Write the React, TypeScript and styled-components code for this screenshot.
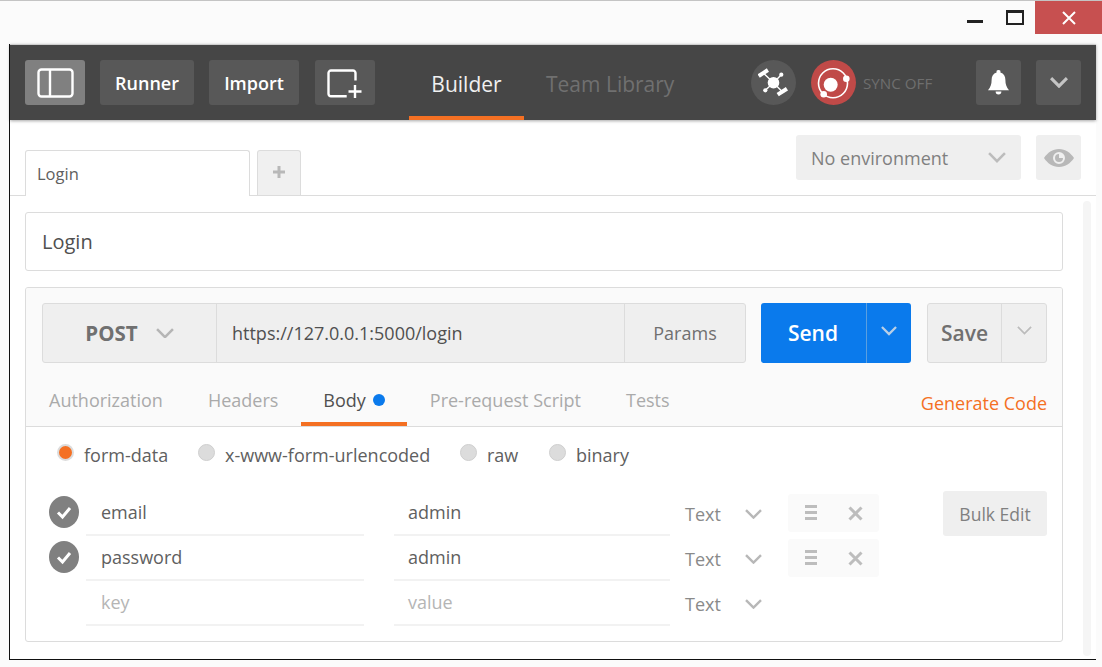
import React from "react";
import styled, { createGlobalStyle } from "styled-components";

const GlobalStyle = createGlobalStyle`
  html, body {
    margin: 0;
    padding: 0;
    height: 667px;
    overflow: hidden;
    background: #fbfbfb;
    font-family: "Open Sans", "Liberation Sans", sans-serif;
  }
  * { box-sizing: border-box; }
`;

const Chevron: React.FC<{ size?: number; color?: string; width?: number }> = ({
  size = 17,
  color = "#b5b5b5",
  width = 2.4,
}) => (
  <svg width={size} height={size * 0.6} viewBox="0 0 17 10" fill="none">
    <path d="M1 1l7.5 7.5L16 1" stroke={color} strokeWidth={width} />
  </svg>
);

const App: React.FC = () => {
  const tabs = ["Authorization", "Headers", "Body", "Pre-request Script", "Tests"];
  const rows = [
    { key: "email", value: "admin", filled: true },
    { key: "password", value: "admin", filled: true },
    { key: "key", value: "value", filled: false },
  ];

  return (
    <Page>
      <GlobalStyle />
      <TitleBar>
        <MinButton>
          <svg width="16" height="16" viewBox="0 0 16 16">
            <rect x="0" y="11" width="16" height="3" fill="#222" />
          </svg>
        </MinButton>
        <MaxButton>
          <svg width="18" height="15" viewBox="0 0 18 15" fill="none">
            <rect x="1" y="1" width="16" height="13" stroke="#222" strokeWidth="2" />
            <rect x="1" y="1" width="16" height="2" fill="#222" />
          </svg>
        </MaxButton>
        <CloseButton>
          <svg width="14" height="14" viewBox="0 0 14 14" fill="none">
            <path d="M1 1l12 12M13 1L1 13" stroke="#fff" strokeWidth="2" />
          </svg>
        </CloseButton>
      </TitleBar>

      <Window>
        <Header>
          <HeaderButton $active $width={60}>
            <svg width="37" height="30" viewBox="0 0 37 30" fill="none">
              <rect x="1.5" y="1.5" width="34" height="27" rx="3" stroke="#fff" strokeWidth="2.4" />
              <path d="M13 2v26" stroke="#fff" strokeWidth="2.4" />
            </svg>
          </HeaderButton>
          <HeaderButton $width={94}>Runner</HeaderButton>
          <HeaderButton $width={90}>Import</HeaderButton>
          <NewButton $width={60}>
            <svg width="36" height="32" viewBox="0 0 36 32" fill="none">
              <path
                d="M19.7 29.3H4a2.5 2.5 0 0 1-2.5-2.5V6A2.500 2.500 0 0 1 4 3.500h22A2.500 2.500 0 0 1 28.500 6v7.500"
                stroke="#fff"
                strokeWidth="2.4"
              />
              <path d="M28 18v13M21.5 24.500h13" stroke="#fff" strokeWidth="2.4" />
            </svg>
          </NewButton>
          <NavTabs>
            <NavTab $active>Builder</NavTab>
            <NavTab>Team Library</NavTab>
          </NavTabs>
          <HeaderRight>
            <RoundIcon $bg="#585858">
              <svg width="31" height="31" viewBox="0 0 31 31" fill="#fff">
                <path d="M15.500 15.700L23.300 7.700M15.500 15.700L7.300 23.300M15.500 15.700L5.300 6M15.500 15.700L24.300 24.700" stroke="#fff" strokeWidth="1.4" />
                <circle cx="15.500" cy="15.700" r="5.800" />
                <rect x="-0.200" y="4" width="11" height="4" transform="rotate(-33 5.300 6)" />
                <circle cx="23.300" cy="7.700" r="2.100" />
                <circle cx="7.300" cy="23.300" r="2.100" />
                <rect x="18.800" y="22.700" width="11" height="4" transform="rotate(-33 24.300 24.700)" />
              </svg>
            </RoundIcon>
            <RoundIcon $bg="#c04a48">
              <svg width="35" height="35" viewBox="0 0 35 35" fill="none">
                <circle cx="17" cy="18.300" r="14.500" stroke="#fff" strokeWidth="1.6" />
                <circle cx="14.700" cy="19.700" r="7" fill="#fff" />
                <circle cx="30.300" cy="13.700" r="3.300" fill="#fff" />
                <circle cx="7.700" cy="29.300" r="3.300" fill="#fff" />
              </svg>
            </RoundIcon>
            <SyncLabel>SYNC OFF</SyncLabel>
            <SquareButton>
              <svg width="21" height="27" viewBox="0 0 22 28" fill="#fff">
                <path d="M11 1a2 2 0 0 1 2 2.400c3.600 1 5.200 4 5.200 7.600 0 5 1.200 7.600 3.800 11H0c2.600-3.400 3.800-6 3.800-11 0-3.600 1.600-6.600 5.200-7.600A2 2 0 0 1 11 1z" />
                <path d="M8 23.500h6a3 3 0 0 1-6 0z" />
              </svg>
            </SquareButton>
            <SquareButton>
              <Chevron size={18} color="#c4c4c4" width={3} />
            </SquareButton>
          </HeaderRight>
        </Header>

        <TabStrip>
          <RequestTab>Login</RequestTab>
          <AddTab>
            <svg width="12" height="12" viewBox="0 0 12 12">
              <path d="M6 0v12M0 6h12" stroke="#b8b8b8" strokeWidth="3" />
            </svg>
          </AddTab>
          <EnvGroup>
            <EnvSelect>
              No environment
              <Chevron size={18} color="#bcbcbc" />
            </EnvSelect>
            <EyeButton>
              <svg width="30" height="18" viewBox="0 0 30 18">
                <path
                  fillRule="evenodd"
                  d="M15 0c6.500 0 11.500 3.800 15 9-3.500 5.200-8.500 9-15 9S3.500 14.200 0 9c3.500-5.200 8.500-9 15-9zm0 3a6 6 0 1 0 0 12 6 6 0 0 0 0-12z"
                  fill="#b8b8b8"
                />
                <path d="M15 5a4 4 0 1 0 4 4h-4z" fill="#b8b8b8" />
              </svg>
            </EyeButton>
          </EnvGroup>
        </TabStrip>

        <Main>
          <Content>
            <NameBox>Login</NameBox>
            <Card>
              <CardTop>
                <UrlRow>
                  <UrlGroup>
                    <MethodCell>
                      POST
                      <Chevron size={18} color="#b5b5b5" />
                    </MethodCell>
                    <UrlCell>https://127.0.0.1:5000/login</UrlCell>
                    <ParamsCell>Params</ParamsCell>
                  </UrlGroup>
                  <SendButton>
                    <SendLabel>Send</SendLabel>
                    <SendArrow>
                      <Chevron size={16} color="#b9cfe6" />
                    </SendArrow>
                  </SendButton>
                  <SaveButton>
                    <SaveLabel>Save</SaveLabel>
                    <SaveArrow>
                      <Chevron size={15} color="#bcbcbc" width={2} />
                    </SaveArrow>
                  </SaveButton>
                </UrlRow>
                <RequestTabs>
                  {tabs.map((t) => (
                    <RequestTabItem key={t} $active={t === "Body"}>
                      {t}
                      {t === "Body" && <BlueDot />}
                    </RequestTabItem>
                  ))}
                  <GenerateCode>Generate Code</GenerateCode>
                </RequestTabs>
              </CardTop>

              <CardBody>
                <RadioRow>
                  <RadioItem $width={141}>
                    <Radio $checked />
                    form-data
                  </RadioItem>
                  <RadioItem $width={262}>
                    <Radio />
                    x-www-form-urlencoded
                  </RadioItem>
                  <RadioItem $width={89}>
                    <Radio />
                    raw
                  </RadioItem>
                  <RadioItem $width={90}>
                    <Radio />
                    binary
                  </RadioItem>
                </RadioRow>

                <TableArea>
                  <Rows>
                    {rows.map((r) => (
                      <Row key={r.key}>
                        <CheckCell>
                          {r.filled && (
                            <svg width="30" height="32" viewBox="0 0 30 32">
                              <ellipse cx="15" cy="16" rx="15" ry="16" fill="#808080" />
                              <path d="M9 16.500l4.500 4.500L21 12" stroke="#fff" strokeWidth="3" fill="none" />
                            </svg>
                          )}
                        </CheckCell>
                        <KeyCell $filled={r.filled}>{r.key}</KeyCell>
                        <ValueCell $filled={r.filled}>{r.value}</ValueCell>
                        <TypeCell>
                          Text
                          <Chevron size={17} color="#b8b8b8" />
                        </TypeCell>
                        {r.filled && (
                          <RowActions>
                            <svg width="12" height="16" viewBox="0 0 12 16" fill="#bdbdbd">
                              <rect width="12" height="3" />
                              <rect y="6" width="12" height="3" />
                              <rect y="12" width="12" height="3" />
                            </svg>
                            <svg width="15" height="15" viewBox="0 0 15 15">
                              <path d="M1.500 1.500l12 12M13.500 1.500l-12 12" stroke="#bdbdbd" strokeWidth="3" />
                            </svg>
                          </RowActions>
                        )}
                      </Row>
                    ))}
                  </Rows>
                  <BulkEdit>Bulk Edit</BulkEdit>
                </TableArea>
              </CardBody>
            </Card>
          </Content>
          <Scrollbar />
        </Main>
      </Window>
    </Page>
  );
};

export default App;

const Page = styled.div`
  width: 1102px;
  height: 667px;
  border-top: 1px solid #c4c4c4;
  background: #fbfbfb;
  overflow: hidden;
`;

const TitleBar = styled.div`
  display: flex;
  justify-content: flex-end;
  align-items: flex-start;
  height: 43px;
`;

const WindowControl = styled.div`
  display: flex;
  align-items: center;
  justify-content: center;
  height: 33px;
`;

const MinButton = styled(WindowControl)`
  width: 16px;
  margin-right: 23px;
  padding-bottom: 2px;
`;

const MaxButton = styled(WindowControl)`
  width: 18px;
  margin-right: 11px;
`;

const CloseButton = styled(WindowControl)`
  width: 67px;
  background: #c75050;
`;

const Window = styled.div`
  width: 1087px;
  height: 616px;
  margin-left: 9px;
  background: #fff;
  border-left: 1px solid #111;
  border-bottom: 1px solid #111;
`;

const Header = styled.header`
  display: flex;
  align-items: center;
  gap: 15px;
  height: 76px;
  padding: 0 15px;
  border-top: 1px solid #cfcfcf;
  background: #464646;
  box-shadow: 0 1px 3px rgba(0, 0, 0, 0.35);
  position: relative;
`;

const HeaderButton = styled.div<{ $active?: boolean; $width: number }>`
  display: flex;
  align-items: center;
  justify-content: center;
  width: ${(p) => p.$width}px;
  height: 45px;
  border-radius: 3px;
  background: ${(p) => (p.$active ? "#808080" : "#585858")};
  color: #fff;
  font-size: 18px;
  font-weight: 600;
`;

const NewButton = styled(HeaderButton)`
  margin-left: 1px;
`;

const NavTabs = styled.nav`
  display: flex;
  align-self: stretch;
  margin-left: 19px;
`;

const NavTab = styled.div<{ $active?: boolean }>`
  display: flex;
  align-items: center;
  justify-content: center;
  min-width: 115px;
  padding: 6px 22px 0;
  font-size: 21px;
  color: ${(p) => (p.$active ? "#f0f0f0" : "#707070")};
  border-bottom: 4px solid ${(p) => (p.$active ? "#f47023" : "transparent")};
`;

const HeaderRight = styled.div`
  display: flex;
  align-items: center;
  gap: 15px;
  margin-left: auto;
`;

const RoundIcon = styled.div<{ $bg: string }>`
  display: flex;
  align-items: center;
  justify-content: center;
  width: 45px;
  height: 45px;
  border-radius: 50%;
  background: ${(p) => p.$bg};
`;

const SyncLabel = styled.div`
  width: 98px;
  margin-left: -8px;
  font-size: 15.2px;
  color: #6e6e6e;
`;

const SquareButton = styled.div`
  display: flex;
  align-items: center;
  justify-content: center;
  width: 45px;
  height: 45px;
  border-radius: 3px;
  background: #585858;
`;

const TabStrip = styled.div`
  display: flex;
  align-items: flex-end;
  gap: 7px;
  height: 76px;
  padding: 0 15px;
  border-bottom: 1px solid #dcdcdc;
`;

const RequestTab = styled.div`
  display: flex;
  align-items: center;
  width: 225px;
  height: 46px;
  margin-bottom: -1px;
  padding: 0 0 1px 11px;
  background: #fff;
  border: 1px solid #dcdcdc;
  border-bottom: none;
  border-radius: 3px 3px 0 0;
  color: #606060;
  font-size: 16.5px;
`;

const AddTab = styled.div`
  display: flex;
  align-items: center;
  justify-content: center;
  width: 44px;
  height: 45px;
  padding-bottom: 2px;
  background: #f0f0f0;
  border: 1px solid #dcdcdc;
  border-bottom: none;
  border-radius: 3px 3px 0 0;
`;

const EnvGroup = styled.div`
  display: flex;
  gap: 15px;
  align-self: flex-start;
  margin-top: 15px;
  margin-left: auto;
`;

const EnvSelect = styled.div`
  display: flex;
  align-items: center;
  justify-content: space-between;
  width: 225px;
  height: 45px;
  padding: 0 15px;
  background: #efefef;
  border-radius: 3px;
  color: #808080;
  font-size: 18px;
`;

const EyeButton = styled.div`
  display: flex;
  align-items: center;
  justify-content: center;
  width: 45px;
  height: 45px;
  background: #efefef;
  border-radius: 3px;
`;

const Main = styled.div`
  display: flex;
  padding: 5px 0 0 15px;
`;

const Content = styled.div`
  display: flex;
  flex-direction: column;
  gap: 16px;
  width: 1038px;
  padding-top: 11px;
`;

const Scrollbar = styled.div`
  width: 8px;
  height: 455px;
  margin-left: 20px;
  border-radius: 4px;
  background: #f5f5f5;
`;

const NameBox = styled.div`
  display: flex;
  align-items: center;
  height: 59px;
  padding-left: 16px;
  border: 1px solid #dcdcdc;
  border-radius: 3px;
  color: #505050;
  font-size: 20px;
`;

const Card = styled.section`
  height: 355px;
  border: 1px solid #dcdcdc;
  border-radius: 3px;
  background: #fff;
  overflow: hidden;
`;

const CardTop = styled.div`
  background: #fafafa;
  border-bottom: 1px solid #dcdcdc;
  padding-top: 15px;
`;

const UrlRow = styled.div`
  display: flex;
  gap: 15px;
  height: 60px;
  padding: 0 15px 0 16px;
`;

const UrlGroup = styled.div`
  display: flex;
  width: 704px;
  height: 60px;
  border: 1px solid #dcdcdc;
  border-radius: 3px;
  background: #efefef;
`;

const MethodCell = styled.div`
  display: flex;
  align-items: center;
  justify-content: center;
  gap: 18px;
  width: 174px;
  border-right: 1px solid #dcdcdc;
  color: #707070;
  font-size: 20.5px;
  font-weight: 700;
`;

const UrlCell = styled.div`
  display: flex;
  align-items: center;
  flex: 1;
  padding-left: 15px;
  color: #505050;
  font-size: 18px;
`;

const ParamsCell = styled.div`
  display: flex;
  align-items: center;
  justify-content: center;
  width: 121px;
  border-left: 1px solid #dcdcdc;
  color: #707070;
  font-size: 18px;
`;

const SendButton = styled.div`
  display: flex;
  width: 150px;
  height: 60px;
  border-radius: 3px;
  background: #0a7aec;
  color: #fff;
`;

const SendLabel = styled.div`
  display: flex;
  align-items: center;
  justify-content: center;
  width: 105px;
  padding-right: 1px;
  font-size: 21px;
  font-weight: 600;
`;

const SendArrow = styled.div`
  display: flex;
  align-items: center;
  justify-content: center;
  flex: 1;
  padding-bottom: 4px;
  border-left: 1px solid #5a9fe0;
`;

const SaveButton = styled.div`
  display: flex;
  width: 120px;
  height: 60px;
  margin-left: 1px;
  border: 1px solid #dcdcdc;
  border-radius: 3px;
  background: #efefef;
`;

const SaveLabel = styled.div`
  display: flex;
  align-items: center;
  justify-content: center;
  width: 73px;
  color: #707070;
  font-size: 21px;
  font-weight: 600;
`;

const SaveArrow = styled.div`
  display: flex;
  align-items: center;
  justify-content: center;
  flex: 1;
  padding-bottom: 6px;
  border-left: 1px solid #dcdcdc;
`;

const RequestTabs = styled.div`
  display: flex;
  align-items: stretch;
  height: 63px;
  padding: 0 15px 0 0.5px;
`;

const RequestTabItem = styled.div<{ $active?: boolean }>`
  display: flex;
  align-items: center;
  gap: 7px;
  padding: 14px 22.5px 0;
  color: ${(p) => (p.$active ? "#505050" : "#aaaaaa")};
  font-size: 18px;
  border-bottom: 4px solid ${(p) => (p.$active ? "#f47023" : "transparent")};
`;

const BlueDot = styled.span`
  width: 12px;
  height: 12px;
  border-radius: 50%;
  background: #0a7aec;
`;

const GenerateCode = styled.div`
  display: flex;
  align-items: center;
  margin-left: auto;
  padding-top: 17px;
  color: #f47023;
  font-size: 18px;
`;

const CardBody = styled.div`
  padding: 0 15px 0 23px;
`;

const RadioRow = styled.div`
  display: flex;
  align-items: center;
  height: 52px;
  padding: 4px 0 0 8px;
`;

const RadioItem = styled.label<{ $width: number }>`
  display: flex;
  align-items: center;
  gap: 10px;
  width: ${(p) => p.$width}px;
  color: #606060;
  font-size: 18px;
`;

const Radio = styled.span<{ $checked?: boolean }>`
  width: 17px;
  height: 17px;
  margin-top: -6px;
  border-radius: 50%;
  background: ${(p) => (p.$checked ? "#f47023" : "#dcdcdc")};
  border: ${(p) => (p.$checked ? "2px solid #dcdcdc" : "1px solid #cfcfcf")};
`;

const TableArea = styled.div`
  display: flex;
  justify-content: space-between;
  align-items: flex-start;
  padding-top: 12px;
`;

const Rows = styled.div`
  display: flex;
  flex-direction: column;
`;

const Row = styled.div`
  display: flex;
  height: 45px;
`;

const CheckCell = styled.div`
  display: flex;
  align-items: center;
  width: 37px;
  padding-bottom: 4px;
`;

const TableCell = styled.div<{ $filled: boolean }>`
  display: flex;
  align-items: center;
  height: 45px;
  padding-bottom: 2px;
  border-bottom: 2px solid #f2f2f2;
  color: ${(p) => (p.$filled ? "#606060" : "#b5b5b5")};
  font-size: 18px;
`;

const KeyCell = styled(TableCell)`
  width: 278px;
  margin-right: 30px;
  padding-left: 15px;
`;

const ValueCell = styled(TableCell)`
  width: 276px;
  padding-left: 14px;
`;

const TypeCell = styled.div`
  display: flex;
  align-items: center;
  justify-content: space-between;
  width: 77px;
  height: 45px;
  margin-left: 15px;
  padding: 1px 0 0;
  color: #8a8a8a;
  font-size: 18px;
`;

const RowActions = styled.div`
  display: flex;
  align-items: center;
  justify-content: center;
  gap: 31px;
  width: 91px;
  height: 38px;
  margin: 3px 0 0 26px;
  border-radius: 3px;
  background: #fafafa;
`;

const BulkEdit = styled.div`
  display: flex;
  align-items: center;
  justify-content: center;
  width: 104px;
  height: 45px;
  border-radius: 3px;
  background: #efefef;
  color: #808080;
  font-size: 17.5px;
`;
